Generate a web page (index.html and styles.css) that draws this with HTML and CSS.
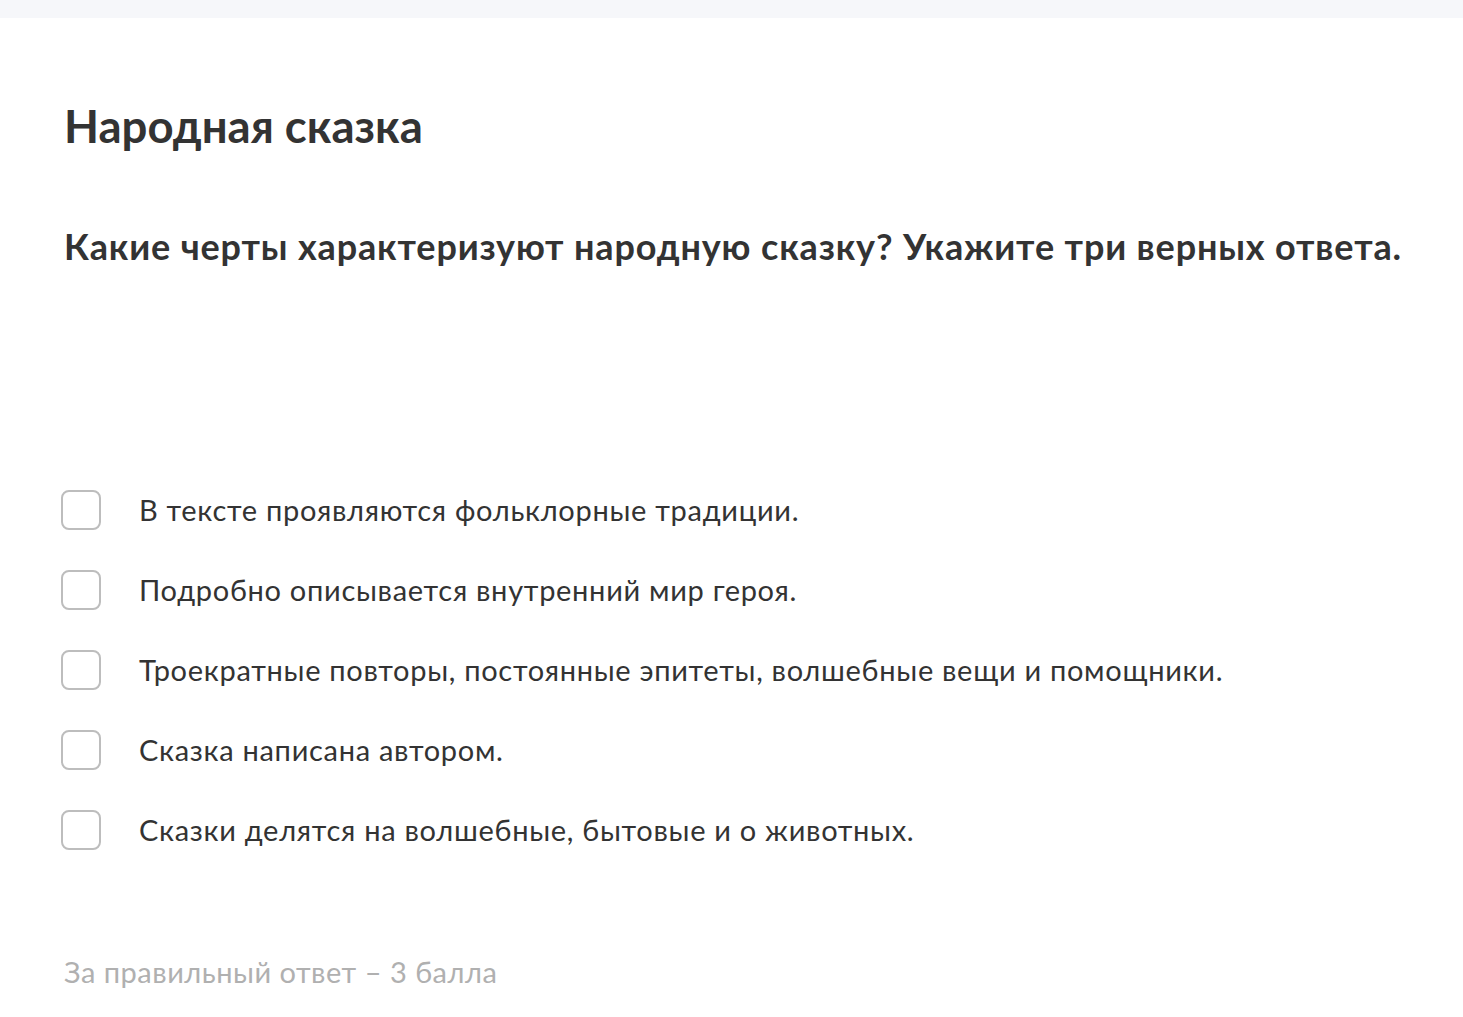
FILE: index.html
```html
<!DOCTYPE html>
<html lang="ru">

<head>
    <meta charset="UTF-8">
    <meta name="viewport" content="width=device-width, initial-scale=1.0">
    <title>Народная сказка</title>
    <link rel="stylesheet" href="styles.css">
</head>

<body>
    <div class="top-bar"></div>

    <div class="task">
        <h1 class="task-title">Народная сказка</h1>

        <p class="task-question">Какие черты характеризуют народную сказку? Укажите три верных ответа.</p>

        <ul class="answers">
            <li class="answer">
                <span class="check"></span>
                <span class="answer-text">В тексте проявляются фольклорные традиции.</span>
            </li>
            <li class="answer">
                <span class="check"></span>
                <span class="answer-text">Подробно описывается внутренний мир героя.</span>
            </li>
            <li class="answer">
                <span class="check"></span>
                <span class="answer-text">Троекратные повторы, постоянные эпитеты, волшебные вещи и помощники.</span>
            </li>
            <li class="answer">
                <span class="check"></span>
                <span class="answer-text">Сказка написана автором.</span>
            </li>
            <li class="answer">
                <span class="check"></span>
                <span class="answer-text">Сказки делятся на волшебные, бытовые и о животных.</span>
            </li>
        </ul>

        <p class="task-score">За правильный ответ – 3 балла</p>
    </div>
</body>

</html>
```

FILE: styles.css
```css
* {
    box-sizing: border-box;
}

body {
    font-family: Lato, "Noto Sans", sans-serif;
    margin: 0;
    padding: 0;
    color: #333333;
    background-color: #ffffff;
}

.top-bar {
    height: 18px;
    background-color: #f6f7fa;
}

.task {
    padding: 0 30px 0 64px;
}

.task-title {
    margin: 0;
    padding-top: 80px;
    font-size: 45.5px;
    font-weight: 700;
    line-height: 56px;
}

.task-question {
    margin: 70px 0 0;
    font-size: 36px;
    font-weight: 700;
    line-height: 44px;
    letter-spacing: 0.85px;
    white-space: nowrap;
}

.answers {
    list-style: none;
    margin: 222px 0 0;
    padding: 0;
    display: flex;
    flex-direction: column;
    gap: 40px;
}

.answer {
    display: flex;
    align-items: center;
    gap: 38px;
    height: 40px;
}

.check {
    flex: none;
    width: 40px;
    height: 40px;
    margin-left: -3px;
    border: 2px solid #bdbdbd;
    border-radius: 8px;
}

.answer-text {
    font-size: 29px;
    line-height: 40px;
    letter-spacing: 0.7px;
}

.task-score {
    margin: 102px 0 0;
    font-size: 29px;
    line-height: 40px;
    letter-spacing: 0.5px;
    color: #b0b0b0;
}
```
